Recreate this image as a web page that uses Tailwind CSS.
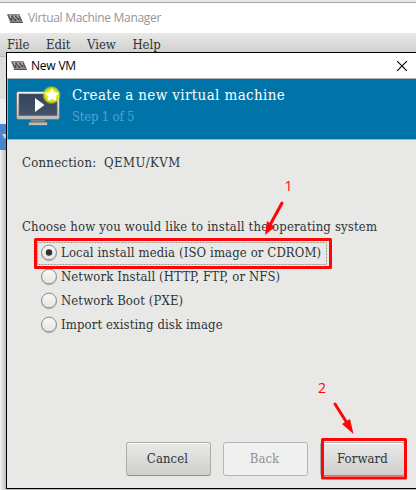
<!DOCTYPE html>
<html lang="en">
<head>
<meta charset="utf-8">
<title>Virtual Machine Manager</title>
<script src="https://cdn.jsdelivr.net/npm/@tailwindcss/browser@4"></script>
</head>
<body class="relative h-[490px] w-[416px] overflow-hidden bg-[#efefef] font-['DejaVu_Serif_Condensed','DejaVu_Serif',serif] text-[13px] leading-[16px] text-[#2e3436] whitespace-nowrap">
<svg class="hidden">
  <symbol id="vmm" viewBox="0 0 16 9">
    <path d="M0 0H12.500L16 8.500H3Z" fill="#8d8686"/>
    <path d="M1 1L4.500 7L5 2L8.500 7V2L11.500 6L12 2L14.500 7" fill="none" stroke="#4b4548" stroke-width="1"/>
    <path d="M2.500 1L4 4M7 2L9 5M10.500 1L12 4" stroke="#dccdd0" stroke-width=".8"/>
    <path d="M3 8.500H16" stroke="#555" stroke-width="1"/>
  </symbol>
</svg>

<!-- Main window -->
<div class="flex h-full flex-col">
  <div class="h-[3px] border-b border-[#a5a5a5] bg-[#e8e8e8]"></div>
  <header class="flex h-[30px] items-center bg-white pl-[7px] font-['Open_Sans','Noto_Sans',sans-serif] text-[12px] tracking-[-0.3px] text-[#969696]">
    <svg class="h-[9px] w-4"><use href="#vmm"/></svg>
    <span class="ml-[5px]">Virtual Machine Manager</span>
  </header>
  <nav class="flex h-[24px] gap-[16.500px] border-b border-[#bbb] bg-linear-to-b from-[#e8e8e6] to-[#cbcbc9] pt-[4px] pl-[7px]">
    <span>File</span><span>Edit</span><span>View</span><span>Help</span>
  </nav>
  <div class="h-[42px] bg-[#dededc]"></div>
  <div class="h-[25px] bg-[#efefef]"></div>
  <div class="h-[26px] bg-[#4a86cf]"><svg class="h-[26px] w-[6px]"><path d="M2 10H8L5 15Z" fill="#c6d6ec"/></svg></div>
  <div class="grow bg-linear-to-r from-[#f3f3f3] to-[#bcbcbc] to-[6px]"></div>
</div>

<!-- New VM dialog -->
<section class="absolute top-[52px] left-[6px] flex h-[437px] w-[410px] flex-col border-y border-l border-black bg-[#e8e8e6]">
  <header class="flex h-[25px] items-center bg-white pr-[9px] pl-[4px] font-['Open_Sans','Noto_Sans',sans-serif] text-[12px] tracking-[-0.2px] text-black">
    <svg class="h-[9px] w-4"><use href="#vmm"/></svg>
    <span class="ml-[4px] grow">New VM</span>
    <svg class="h-[10px] w-[10px]" viewBox="0 0 10 10"><path d="M0 0L10 10M10 0L0 10" stroke="#000" stroke-width="1.1"/></svg>
  </header>
  <div class="flex h-[62px] border-y border-l border-[#a9b1b5] bg-[#0073a9] pl-[8px]">
    <svg class="mt-[7px] h-[43px] w-[46px]" viewBox="0 0 46 43">
      <defs>
        <linearGradient id="bez" x2="0" y2="1"><stop stop-color="#f6f6f6"/><stop offset="1" stop-color="#b9b9b9"/></linearGradient>
        <linearGradient id="scr" x2="0" y2="1"><stop stop-color="#34435a"/><stop offset="1" stop-color="#46536a"/></linearGradient>
        <radialGradient id="glow"><stop offset=".55" stop-color="#f2ee10"/><stop offset=".78" stop-color="#d5e010" stop-opacity=".85"/><stop offset="1" stop-color="#9cc030" stop-opacity="0"/></radialGradient>
      </defs>
      <path d="M15 33H29V38H15Z" fill="#858585"/>
      <rect x="12.500" y="36" width="19" height="3.500" rx="1" fill="#bbb" stroke="#666"/>
      <rect x=".5" y="5.500" width="43" height="28" rx="2" fill="url(#bez)" stroke="#747474"/>
      <rect x="3" y="8" width="38" height="21.500" fill="url(#scr)" stroke="#5e6570" stroke-width=".7"/>
      <path d="M19 12L28.500 19L19 26Z" fill="#fff"/>
      <circle cx="35.500" cy="9" r="9.500" fill="url(#glow)"/>
      <path d="M36 2L38 6.200L43 7L39.500 10.200L40.500 15L36 12.800L31.500 15L32.300 10.300L28.700 7L34 6.200Z" fill="#fff"/>
    </svg>
    <div class="ml-[10px] pt-[6px]">
      <h1 class="text-[15px] leading-[20px] tracking-[0.38px] text-white">Create a new virtual machine</h1>
      <p class="mt-[4px] text-[13px] leading-[16px] tracking-[-0.2px] text-[#4fa3d8]">Step 1 of 5</p>
    </div>
  </div>
  <main class="flex grow flex-col pl-[15px]">
    <p class="mt-[15px]"><span class="tracking-[0.27px]">Connection:</span><span class="ml-[7.500px] tracking-[0.450px]">QEMU/KVM</span></p>
    <p class="mt-[48px] tracking-[0.160px]">Choose how you would like to install the operating system</p>
    <div class="mt-[6px] flex flex-col pl-[19px] tracking-[0.110px]">
      <label class="flex h-6 items-center gap-[4px]"><svg class="h-[18px] w-4 overflow-visible"><use href="#radio"/><circle cx="8" cy="8.500" r="3.200" fill="#2e3436"/></svg><span>Local install media (ISO image or CDROM)</span></label>
      <label class="flex h-6 items-center gap-[4px]"><svg class="h-[18px] w-4 overflow-visible"><use href="#radio"/></svg><span>Network Install (HTTP, FTP, or NFS)</span></label>
      <label class="flex h-6 items-center gap-[4px]"><svg class="h-[18px] w-4 overflow-visible"><use href="#radio"/></svg><span>Network Boot (PXE)</span></label>
      <label class="flex h-6 items-center gap-[4px]"><svg class="h-[18px] w-4 overflow-visible"><use href="#radio"/></svg><span>Import existing disk image</span></label>
    </div>
    <footer class="mt-auto mr-[11px] mb-[12px] flex justify-end gap-[12px] tracking-[0.1px]">
      <button class="h-[34px] w-[85px] rounded-[3px] border border-[#acacaa] border-b-[#8f8f8d] bg-linear-to-b from-[#e9e9e7] to-[#cfcfcd] pr-[2px] shadow-[inset_0_1px_#fff]">Cancel</button>
      <button class="h-[34px] w-[85px] rounded-[3px] border border-[#b5b5b3] bg-[#f0f0f0] pr-[2px] text-[#8e9192]">Back</button>
      <button class="h-[34px] w-[85px] rounded-[3px] border border-[#acacaa] border-b-[#8f8f8d] bg-linear-to-b from-[#e9e9e7] to-[#cfcfcd] shadow-[inset_0_1px_#fff]">Forward</button>
    </footer>
  </main>
</section>

<!-- Annotations -->
<svg class="absolute top-0 left-0 h-[490px] w-[416px] font-['Open_Sans','Noto_Sans',sans-serif]" viewBox="0 0 416 490">
  <defs>
    <linearGradient id="rad" x2="0" y2="1"><stop stop-color="#f8f8f8"/><stop offset="1" stop-color="#e4e4e2"/></linearGradient>
    <g id="radio"><circle cx="8" cy="9.300" r="7.600" fill="none" stroke="#bcbcba"/><circle cx="8" cy="8.500" r="7.400" fill="url(#rad)" stroke="#888a87"/></g>
  </defs>
  <rect x="37.500" y="242.500" width="289" height="22" fill="none" stroke="#9a9a99" stroke-dasharray="2 1"/>
  <g fill="none" stroke="#ff0505" stroke-width="3" stroke-linejoin="round">
    <rect x="35.500" y="239.500" width="295" height="28"/>
    <rect x="322.500" y="439.500" width="83" height="38.500"/>
    <path d="M282 203L270 225M335 404L347 423" stroke-linecap="round"/>
  </g>
  <path d="M265 235L267 221L275 227ZM353.500 434L342 424L350 419Z" fill="#ff0505"/>
  <g fill="#ff0505" font-size="14"><text x="284.500" y="191">1</text><text x="318" y="393">2</text></g>
</svg>
</body>
</html>
